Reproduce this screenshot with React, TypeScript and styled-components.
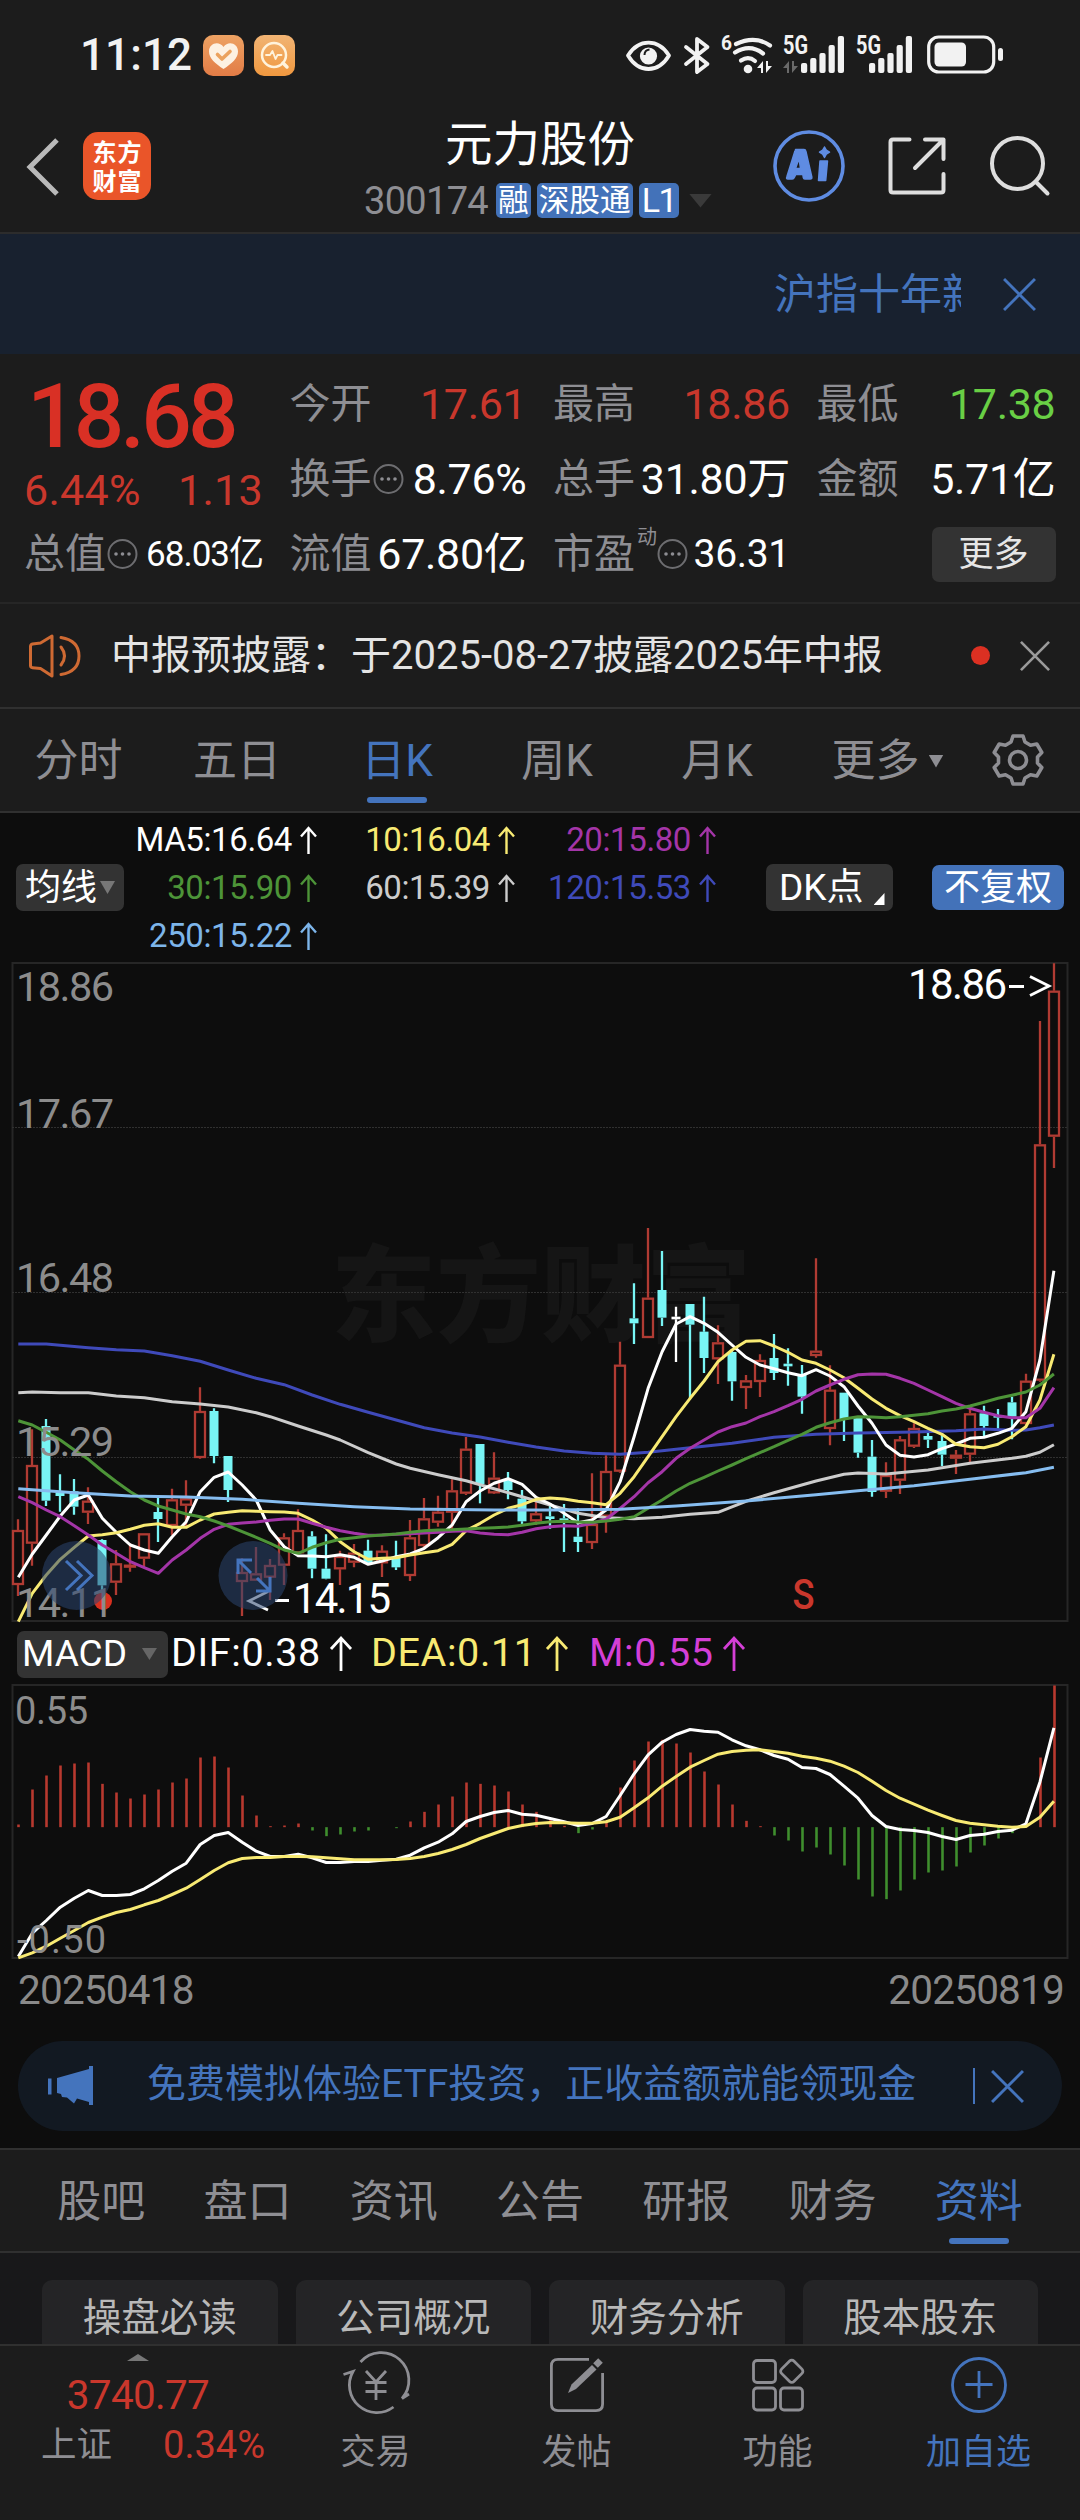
import React from "react";
import styled, { createGlobalStyle, css } from "styled-components";

const blue = "#4474bd";
const red = "#c9372c";
const grey = "#8e8e93";
const sans = `Roboto, "Noto Sans CJK SC", sans-serif`;

const Global = createGlobalStyle`
  body { margin: 0; background: #1c1c1c; }
  * { box-sizing: border-box; }
  svg { display: block; flex: none; overflow: visible; }
`;

const Page = styled.div`
  width: 1080px;
  height: 2520px;
  overflow: hidden;
  display: flex;
  flex-direction: column;
  background: #1c1c1c;
  color: #fff;
  font-family: ${sans};
  white-space: nowrap;
`;

/* ---------- status bar ---------- */
const StatusBar = styled.div`
  height: 110px;
  flex: none;
  padding: 0 76px 0 80px;
  display: flex;
  align-items: center;
  justify-content: space-between;
`;
const StatusLeft = styled.div`
  display: flex;
  align-items: center;
  gap: 10px;
`;
const Clock = styled.span`
  width: 113px;
  font-size: 44px;
  line-height: 50px;
  font-weight: 500;
  letter-spacing: 0.1px;
  color: #f2f2f2;
`;

/* ---------- header ---------- */
const Header = styled.header`
  height: 124px;
  flex: none;
  display: grid;
  grid-template-columns: 320px 440px 320px;
  align-items: start;
  border-bottom: 2px solid #2c2c2c;
`;
const HeaderLeft = styled.div`
  display: flex;
  align-items: center;
  gap: 23px;
  padding: 22px 0 0 26px;
`;
const AppLogo = styled.div`
  width: 68px;
  height: 68px;
  border-radius: 15px;
  background: #ea5529;
  display: grid;
  grid-template-columns: 25px 25px;
  grid-auto-rows: 29px;
  place-content: center;
  justify-items: center;
  font: 700 24px/27px "Noto Sans CJK SC", sans-serif;
`;
const HeaderMid = styled.div`
  display: flex;
  flex-direction: column;
  align-items: center;
`;
const StockName = styled.div`
  margin-top: 7px;
  font-size: 47.5px;
  line-height: 56px;
`;
const CodeRow = styled.div`
  margin: 9px 0 0 -4px;
  display: flex;
  align-items: center;
  gap: 6px;
`;
const Code = styled.span`
  margin-right: 2px;
  font-size: 38px;
  line-height: 36px;
  letter-spacing: -0.7px;
  color: ${grey};
  padding-top: 1px;
`;
const Tag = styled.span`
  height: 35px;
  padding: 0 2px;
  border-radius: 5px;
  background: #4372b9;
  font-size: 30.7px;
  line-height: 36px;
`;
const LevelTag = styled(Tag)`
  padding: 0 3px;
  font-size: 34px;
  letter-spacing: -1.6px;
  line-height: 35px;
`;
const Caret = styled.i<{ w: number; h: number; c: string; ml?: number; up?: boolean }>`
  flex: none;
  width: ${(p) => p.w}px;
  height: ${(p) => p.h}px;
  margin-left: ${(p) => p.ml ?? 0}px;
  background: ${(p) => p.c};
  clip-path: ${(p) => (p.up ? "polygon(0 100%, 100% 100%, 50% 0)" : "polygon(0 0, 100% 0, 50% 100%)")};
`;
const HeaderRight = styled.div`
  display: flex;
  align-items: center;
  padding: 19px 0 0 12px;
  gap: 41px;
`;

/* ---------- ticker banner ---------- */
const Banner = styled.div`
  height: 120px;
  flex: none;
  display: flex;
  align-items: center;
  justify-content: flex-end;
  padding-right: 44px;
  background: #18212f;
  color: ${blue};
`;
const Marquee = styled.div`
  width: 187px;
  margin: 2px 42px 0 0;
  overflow: hidden;
  font-size: 42px;
  line-height: 60px;
`;

/* ---------- quote ---------- */
const Quote = styled.section`
  height: 250px;
  flex: none;
  display: grid;
  grid-template-columns: 239px 237px 237px 239px;
  column-gap: 26.5px;
  padding: 13px 24px 0 24px;
  border-bottom: 2px solid #262626;
`;
const QuoteCol = styled.div`
  display: flex;
  flex-direction: column;
`;
const Price = styled.div`
  height: 96px;
  padding-left: 3px;
  font-size: 89px;
  line-height: 100px;
  font-weight: 500;
  letter-spacing: -3.9px;
  color: #d93025;
`;
const Change = styled.div`
  height: 54px;
  display: flex;
  justify-content: space-between;
  font-size: 43px;
  line-height: 55px;
  letter-spacing: 0.3px;
  color: ${red};
`;
const Cell = styled.div`
  height: 75px;
  display: flex;
  align-items: center;
  color: ${grey};
  font-size: 41px;
  line-height: 75px;
`;
const Val = styled.span<{ c?: string; size?: number; ls?: number }>`
  margin-left: auto;
  color: ${(p) => p.c ?? "#fff"};
  font-size: ${(p) => p.size ?? 43}px;
  letter-spacing: ${(p) => p.ls ?? -0.3}px;
`;
const Sup = styled.span`
  align-self: flex-start;
  margin: 8px -1px 0 2px;
  font-size: 20px;
  line-height: 24px;
`;
const MoreButton = styled.button`
  width: 124px;
  height: 55px;
  margin-left: auto;
  padding: 0;
  border: 0;
  border-radius: 7px;
  background: #333;
  color: #e6e6e6;
  font: 35px/52px ${sans};
`;

/* ---------- notice ---------- */
const Notice = styled.div`
  height: 105px;
  flex: none;
  display: flex;
  align-items: center;
  padding: 0 30px 0 28px;
  border-bottom: 2px solid #303030;
`;
const NoticeText = styled.span`
  margin-left: 29px;
  flex: 1;
  font-size: 40px;
  line-height: 60px;
  color: #e4e4e4;
`;
const RedDot = styled.i`
  width: 19px;
  height: 19px;
  margin-right: 30px;
  border-radius: 50%;
  background: #dc3022;
`;

/* ---------- tab bars ---------- */
const tabText = css<{ on?: boolean }>`
  position: relative;
  display: flex;
  align-items: center;
  justify-content: center;
  height: 100%;
  padding-top: 2px;
  font-size: 44px;
  line-height: 60px;
  color: ${(p) => (p.on ? blue : grey)};
  &::after {
    content: "";
    display: ${(p) => (p.on ? "block" : "none")};
    position: absolute;
    bottom: 8px;
    width: 60px;
    height: 6px;
    border-radius: 3px;
    background: ${blue};
  }
`;
const PeriodTabs = styled.nav`
  height: 104px;
  flex: none;
  display: grid;
  grid-template-columns: 157px repeat(4, 160px) 181px 1fr;
  align-items: center;
  border-bottom: 2px solid #303030;
  & > svg { margin-left: 13px; }
`;
const PeriodTab = styled.div<{ on?: boolean }>`
  ${tabText}
`;
const InfoTabs = styled.nav`
  height: 105px;
  flex: none;
  display: grid;
  grid-template-columns: repeat(7, 1fr);
  padding: 0 28px;
  border-top: 2px solid #303030;
  border-bottom: 2px solid #303030;
`;
const InfoTab = styled(PeriodTab)`
  &::after { bottom: 7px; }
`;

/* ---------- chart area ---------- */
const ChartArea = styled.section`
  height: 1335px;
  flex: none;
  background: #0d0d0d;
  display: flex;
  flex-direction: column;
`;
const Legend = styled.div`
  height: 149px;
  flex: none;
  display: flex;
  align-items: center;
  padding-left: 16px;
`;
const Chip = styled.button<{ w: number; primary?: boolean; ml?: number }>`
  width: ${(p) => p.w}px;
  height: ${(p) => (p.primary ? 45 : 47)}px;
  margin: 0 0 0 ${(p) => p.ml ?? 0}px;
  padding: 0 0 0 ${(p) => (p.primary ? 0 : 9)}px;
  display: flex;
  align-items: center;
  justify-content: ${(p) => (p.primary ? "center" : "flex-start")};
  border: 0;
  border-radius: 7px;
  background: ${(p) => (p.primary ? "#4372b9" : "#333")};
  color: #fff;
  font: 36px/46px ${sans};
`;
const DkChip = styled(Chip)`
  padding-left: 13px;
  font-size: 37px;
`;
const Corner = styled.i`
  align-self: flex-end;
  width: 11px;
  height: 12px;
  margin: 0 0 6px 10px;
  background: #fff;
  clip-path: polygon(100% 0, 100% 100%, 0 100%);
`;
const MaGrid = styled.div`
  display: grid;
  grid-template-columns: 193px 198px 201px;
  grid-auto-rows: 48px;
`;
const MaItem = styled.span<{ c: string }>`
  display: flex;
  align-items: center;
  justify-content: flex-end;
  gap: 8px;
  color: ${(p) => p.c};
  font-size: 33px;
  line-height: 48px;
  letter-spacing: -0.4px;
`;
const MacdHead = styled.div`
  height: 62px;
  flex: none;
  display: flex;
  align-items: center;
  padding-left: 17px;
`;
const MacdChip = styled(Chip)`
  padding-left: 5px;
  margin-top: 2px;
  margin-right: 3px;
  font-size: 37px;
`;
const MacdItem = styled.span<{ c: string; w: number }>`
  width: ${(p) => p.w}px;
  display: flex;
  align-items: center;
  gap: 9px;
  color: ${(p) => p.c};
  font-size: 39.5px;
  line-height: 60px;
  letter-spacing: 0.6px;
`;
const Dates = styled.div`
  height: 82px;
  flex: none;
  display: flex;
  justify-content: space-between;
  padding: 0 16px 0 18px;
  font-size: 40.5px;
  line-height: 63px;
  letter-spacing: -0.8px;
  color: #8a8a8a;
`;
const Promo = styled.div`
  height: 90px;
  flex: none;
  margin: 0 18px;
  padding: 0 38px 0 30px;
  display: flex;
  align-items: center;
  border-radius: 45px;
  background: #121922;
  color: ${blue};
`;
const PromoText = styled.span`
  flex: 1;
  margin-left: 53px;
  font-size: 39px;
  line-height: 60px;
  padding-bottom: 4px;
`;
const Divider = styled.i`
  width: 2px;
  height: 36px;
  margin-right: 16px;
  background: ${blue};
`;

/* ---------- info cards ---------- */
const Cards = styled.div`
  height: 91px;
  flex: none;
  overflow: hidden;
  display: grid;
  grid-template-columns: repeat(4, 1fr);
  gap: 18px;
  padding: 27px 42px 0;
  background: #18181a;
`;
const Card = styled.div`
  height: 80px;
  border-radius: 10px;
  background: #242426;
  text-align: center;
  font-size: 38.5px;
  line-height: 76px;
  color: #b9b9b9;
`;

/* ---------- bottom bar ---------- */
const BottomBar = styled.footer`
  flex: 1;
  display: grid;
  grid-template-columns: 275px repeat(4, 201px);
  border-top: 2px solid #303030;
`;
const IndexBox = styled.div`
  display: flex;
  flex-direction: column;
  align-items: center;
  padding: 8px 0 0 1px;
`;
const IndexValue = styled.div`
  margin-top: 6px;
  font-size: 40.5px;
  line-height: 56px;
  letter-spacing: -0.7px;
  color: ${red};
`;
const IndexRow = styled.div`
  align-self: stretch;
  display: flex;
  justify-content: space-between;
  padding: 0 10px 0 40px;
  font-size: 38px;
  line-height: 44px;
  letter-spacing: 0;
  color: ${red};
`;
const IndexName = styled.span`
  font-size: 35.5px;
  color: ${grey};
`;
const Action = styled.div<{ on?: boolean }>`
  display: flex;
  flex-direction: column;
  align-items: center;
  padding-top: 8px;
  font-size: 35px;
  line-height: 50px;
  color: ${(p) => (p.on ? blue : grey)};
  svg { margin-bottom: 12px; }
`;

/* ---------- small drawings ---------- */
const Cross = ({ s = 32, c }: { s?: number; c: string }) => (
  <svg width={s} height={s} viewBox="0 0 32 32" stroke={c} strokeWidth="2.8" fill="none">
    <path d="M1 1 31 31M31 1 1 31" />
  </svg>
);
const UpArrow = ({ s = 17, h = 28, w = 2.4 }: { s?: number; h?: number; w?: number }) => (
  <svg width={s} height={h} viewBox={`0 0 ${s} ${h}`} fill="none" stroke="currentColor" strokeWidth={w}>
    <path d={`M${s / 2} ${h}V2M1 ${s / 2 + 2} ${s / 2} 2 ${s - 1} ${s / 2 + 2}`} />
  </svg>
);
const Dots = () => (
  <svg width="32" height="32" viewBox="0 0 32 32">
    <circle cx="16.5" cy="15" r="14" fill="none" stroke="#6d6d70" strokeWidth="2" />
    <g fill={grey}>
      <circle cx="10" cy="15" r="1.8" />
      <circle cx="16.5" cy="15" r="1.8" />
      <circle cx="23" cy="15" r="1.8" />
    </g>
  </svg>
);
const HeartApp = () => (
  <svg width="41" height="41" viewBox="0 0 41 41">
    <defs>
      <linearGradient id="ha" x1="0" y1="0" x2="0" y2="1">
        <stop offset="0" stopColor="#eda263" />
        <stop offset="1" stopColor="#e27c46" />
      </linearGradient>
    </defs>
    <rect width="41" height="41" rx="10" fill="url(#ha)" />
    <path d="M20.5 34C12 28.500 6 23 6 16.500 6 8 16 5.500 20.500 12 25 5.500 35 8 35 16.500 35 23 29 28.500 20.500 34Z" fill="#fdf1e2" />
    <path d="m14.500 19.500 4.500 4.500 8-7.500" fill="none" stroke="#eba25e" strokeWidth="3.600" strokeLinecap="round" strokeLinejoin="round" />
  </svg>
);
const PulseApp = () => (
  <svg width="41" height="41" viewBox="0 0 41 41">
    <defs>
      <linearGradient id="pa" x1="0" y1="0" x2="0" y2="1">
        <stop offset="0" stopColor="#f1b474" />
        <stop offset="1" stopColor="#f0983f" />
      </linearGradient>
    </defs>
    <rect width="41" height="41" rx="10" fill="url(#pa)" />
    <g fill="none" stroke="#fff3dc" strokeLinecap="round" strokeLinejoin="round">
      <circle cx="20" cy="20" r="12" strokeWidth="2.500" />
      <path d="m29 28 4 4" strokeWidth="3.500" />
      <path d="M12 20h4l2.500-4 3 8 2-4h4" strokeWidth="1.800" />
    </g>
  </svg>
);
const bars = [10, 15, 20, 28, 37];
const StatusIcons = () => (
  <svg width="380" height="44" viewBox="624 32 380 44">
    <g fill="none" stroke="#f2f2f2" strokeWidth="3.800" strokeLinejoin="round" strokeLinecap="round">
      <path d="M628 54.500C634 45 641 41.700 648.500 41.700S663 45 669 54.500C663 64.500 656 68 648.500 68S634 64.500 628 54.500Z" />
      <path d="m686 46 21.500 17-10.500 8V38l10.500 8L686 63" />
      <path d="M736 43q19-9 34 1.500" strokeWidth="4.200" />
      <path d="M735 51.500q15-9 28 1" strokeWidth="4.200" />
      <path d="M741 59.500q7.500-5 14 .5" strokeWidth="4.200" />
    </g>
    <circle cx="648.500" cy="55" r="8.600" fill="#f2f2f2" />
    <path d="M644.500 54q0-5 5-5.500" fill="none" stroke="#1c1c1c" strokeWidth="2" />
    <circle cx="748" cy="68" r="4.300" fill="#f2f2f2" />
    <path d="m763 60-6 7h4v5h2zM766 72l6-7h-4v-5h-2z" fill="#f2f2f2" />
    <path d="m789 60-6 7h4v5h2zM792 72l6-7h-4v-5h-2z" fill="#6a6a6a" />
    <g fill="#f2f2f2" fontFamily="Roboto, sans-serif" fontWeight="700">
      <text x="721" y="49" fontSize="21" textLength="11" lengthAdjust="spacingAndGlyphs">6</text>
      <text x="783" y="53" fontSize="26" textLength="25" lengthAdjust="spacingAndGlyphs">5G</text>
      <text x="856" y="53" fontSize="26" textLength="25" lengthAdjust="spacingAndGlyphs">5G</text>
      {[801, 869].map((x) => bars.map((h, i) => <rect key={x + i} x={x + i * 9.200} y={72 - h} width="6.200" height={h} rx="2" />))}
    </g>
    <rect x="928.700" y="36" width="65" height="35" rx="10" fill="none" stroke="#f2f2f2" strokeWidth="3.200" />
    <rect x="934.500" y="41.500" width="31.500" height="24" rx="4.500" fill="#f2f2f2" />
    <rect x="998" y="47" width="5" height="13" rx="2.500" fill="#f2f2f2" />
  </svg>
);
const Back = () => (
  <svg width="34" height="56" viewBox="0 0 34 56" fill="none" stroke="#b9b9b9" strokeWidth="5">
    <path d="M31 2 4 29 31 56" />
  </svg>
);
const AiIcon = () => (
  <svg width="74" height="74" viewBox="0 0 74 74">
    <circle cx="37" cy="37" r="34" fill="none" stroke="#5f8ce2" strokeWidth="3.600" />
    <g fill="#5f8ce2" stroke="#5f8ce2" strokeWidth="1.500" strokeLinejoin="round">
      <path fillRule="evenodd" d="M23.500 20.500h8.500q1.500 0 1.800 1.500l6 26q.3 2-1.500 2h-5.500q-1.200 0-1.500-1.500l-.5-3h-7l-1.500 3q-.7 1.500-2 1.500h-4.500q-1.800 0-1-2l8-25.500q.3-2 2.200-2zm3.500 9-3.500 10h5z" />
      <path d="M48 32h7.500l-1.800 19.500h-7.200z" />
      <path d="m52.500 18 1.800 3.200 3.200 2-3.200 2-1.800 3.300-1.800-3.300-3.200-2 3.200-2z" />
    </g>
  </svg>
);
const ShareIcon = () => (
  <svg width="60" height="60" viewBox="0 0 60 60" fill="none" stroke="#dedede" strokeWidth="4" strokeLinecap="round" strokeLinejoin="round">
    <path d="M22.500 3.500H6q-2.500 0-2.500 2.500v48q0 2.500 2.500 2.500h48q2.500 0 2.500-2.500V38" />
    <path d="M38 3.500h18.500V23M56.500 3.500 28 32" />
  </svg>
);
const SearchIcon = () => (
  <svg width="62" height="62" viewBox="0 0 62 62" fill="none" stroke="#dedede" strokeWidth="4" strokeLinecap="round">
    <circle cx="29.5" cy="28.500" r="25.500" />
    <path d="m47.500 46.500 12 12" />
  </svg>
);
const Speaker = () => (
  <svg width="54" height="46" viewBox="0 0 54 46" fill="none" stroke="#cf6a33" strokeWidth="3" strokeLinejoin="round" strokeLinecap="round">
    <path d="M2.500 13.500q0-2 2-2.500l8-1L24 3v40l-11.500-7.500-8-.8q-2-.2-2-2.200z" />
    <path d="M33 14q7 9 0 18M33 4.500q18 3 18 18.500T33 41.500" />
  </svg>
);
const Gear = () => (
  <svg width="54" height="54" viewBox="0 0 54 54" fill="none" stroke={grey} strokeWidth="3.600" strokeLinejoin="round">
    <path d="M22 3h10l2 6 5.500 3.200 6.300-1.200 5 8.500-4.300 4.500v6l4.300 4.500-5 8.500-6.300-1.200L34 45l-2 6H22l-2-6-5.500-3.200L8.200 43l-5-8.500L7.500 30v-6l-4.300-4.500 5-8.500 6.300 1.200L20 9z" />
    <circle cx="27" cy="27" r="8.500" />
  </svg>
);
const Horn = () => (
  <svg width="46" height="40" viewBox="0 0 46 40" fill={blue}>
    <path d="M0 12.500h3.500v16H0zM9 12 41 3V0h4v39h-4v-3l-12-3.500-3 5-7-6-5-.5-1-3-4-1z" />
  </svg>
);
const YenIcon = () => (
  <svg width="68" height="62" viewBox="0 0 68 62" fill="none" stroke="currentColor" strokeWidth="2.800">
    <path d="M18.500 8A27.500 27.500 0 0 1 60 44.500l7-4.500M51.500 53A27.500 27.500 0 0 1 11 17.500L1.500 20.500" />
    <path d="m24 17 10 11 10-11M34 28v18M23.500 28.500h21M23.500 37.500h21" />
  </svg>
);
const PostIcon = () => (
  <svg width="62" height="62" viewBox="0 0 62 62" fill="none" stroke="currentColor" strokeWidth="2.800">
    <path d="M43 5.400H12q-6.600 0-6.600 6.600v38q0 6.600 6.600 6.600h38q6.600 0 6.600-6.600V19" />
    <path d="m22 39 3.500-8.500L46 11l4.500 4.500L30 35z" fill="currentColor" stroke="none" />
    <path d="m49.500 11.500 5-5" strokeWidth="6.500" />
  </svg>
);
const GridIcon = () => (
  <svg width="62" height="62" viewBox="0 0 62 62" fill="none" stroke="currentColor" strokeWidth="2.800">
    <rect x="6.500" y="6.500" width="22" height="22" rx="3.500" />
    <rect x="6.500" y="34" width="22" height="22" rx="3.500" />
    <rect x="33.500" y="34" width="22" height="22" rx="3.500" />
    <rect x="36" y="8.500" width="17.500" height="17.500" rx="3" transform="rotate(45 44.750 17.250)" />
  </svg>
);
const PlusIcon = () => (
  <svg width="62" height="62" viewBox="0 0 62 62" fill="none" stroke="currentColor" strokeWidth="2.800">
    <circle cx="31" cy="31" r="26.500" />
    <path d="M31 17v27M17.500 30.500h27" />
  </svg>
);

/* ---------- chart data ---------- */
type Candle = [number, number, number, number, "R" | "G" | "W"];
/* high, body top, body bottom, low on the chart's 1/3 px scale */
const candles: Candle[] = [
  [658, 690, 855, 888, "R"], [388, 495, 731, 797, "R"], [357, 378, 602, 618, "G"], [523, 579, 588, 635, "G"],
  [537, 574, 620, 644, "G"], [562, 602, 638, 672, "R"], [718, 720, 856, 880, "G"], [750, 790, 848, 885, "R"],
  [730, 794, 802, 815, "R"], [700, 700, 776, 803, "R"], [592, 636, 657, 726, "G"], [566, 598, 678, 705, "R"],
  [541, 595, 617, 680, "R"], [262, 333, 474, 476, "R"], [325, 333, 468, 490, "G"], [468, 468, 570, 606, "G"],
  [775, 816, 846, 948, "R"], [741, 820, 842, 842, "R"], [777, 795, 833, 900, "R"], [700, 712, 797, 855, "R"],
  [628, 690, 760, 765, "R"], [694, 709, 806, 835, "G"], [703, 806, 836, 838, "G"], [752, 768, 808, 855, "R"],
  [732, 758, 788, 802, "R"], [719, 752, 790, 795, "G"], [736, 752, 790, 831, "R"], [722, 772, 802, 810, "G"],
  [660, 712, 828, 843, "R"], [594, 655, 738, 745, "R"], [587, 635, 668, 680, "R"], [538, 571, 638, 690, "R"],
  [411, 446, 581, 585, "R"], [432, 432, 552, 610, "G"], [457, 533, 580, 582, "R"], [516, 540, 570, 598, "G"],
  [570, 596, 664, 672, "G"], [600, 640, 664, 675, "R"], [618, 649, 657, 686, "G"], [612, 655, 668, 756, "G"],
  [625, 710, 726, 756, "G"], [520, 672, 729, 747, "R"], [466, 513, 650, 698, "R"], [125, 194, 515, 518, "R"],
  [-50, 55, 70, 132, "G"], [-216, -7, 114, 114, "R"], [-147, -30, 53, 78, "G"], [20, 50, 58, 186, "W"],
  [12, 12, 74, 298, "G"], [-10, 95, 174, 219, "G"], [76, 127, 178, 252, "R"], [150, 156, 244, 302, "G"],
  [225, 241, 264, 327, "R"], [163, 180, 246, 291, "R"], [102, 174, 219, 240, "G"], [145, 191, 199, 257, "G"],
  [195, 222, 290, 341, "G"], [-125, 152, 168, 173, "R"], [196, 269, 387, 436, "R"], [278, 278, 358, 423, "G"],
  [350, 352, 458, 473, "G"], [420, 470, 576, 590, "G"], [487, 525, 575, 594, "R"], [408, 418, 542, 582, "R"],
  [370, 384, 440, 444, "R"], [393, 408, 419, 444, "G"], [400, 423, 464, 498, "G"], [450, 464, 476, 522, "R"],
  [325, 340, 464, 487, "R"], [317, 340, 378, 412, "G"], [327, 345, 353, 390, "G"], [290, 307, 350, 418, "G"],
  [221, 242, 372, 378, "R"], [-837, -467, 242, 245, "R"], [-1010, -928, -490, -396, "R"],
];
const seq = (...v: number[]): [number, number][] => v.map((y, i) => [i, y]);
const pairs = (...v: number[]): [number, number][] =>
  v.reduce<[number, number][]>((a, n, i) => (i % 2 ? (a[a.length - 1][1] = n, a) : [...a, [n, 0]]), []);

const ma5 = seq(832, 762, 705, 648, 600, 585, 655, 697, 735, 750, 760, 710, 665, 575, 532, 516, 555, 600, 690, 740, 767, 768, 770, 764, 772, 793, 783, 770, 762, 745, 713, 675, 605, 573, 550, 536, 553, 592, 612, 640, 668, 660, 630, 545, 410, 265, 155, 72, 50, 70, 97, 135, 172, 195, 206, 218, 227, 209, 228, 260, 318, 370, 435, 466, 471, 464, 446, 432, 415, 412, 400, 385, 335, 180, -88);
const ma10 = seq(965, 880, 825, 778, 742, 708, 704, 698, 688, 676, 671, 682, 682, 660, 642, 637, 632, 634, 635, 636, 640, 660, 685, 725, 755, 778, 775, 773, 765, 758, 752, 733, 692, 670, 645, 625, 614, 598, 594, 597, 604, 608, 614, 580, 530, 470, 410, 350, 295, 243, 185, 150, 124, 122, 138, 157, 180, 190, 210, 233, 265, 297, 325, 347, 365, 385, 403, 433, 440, 443, 433, 410, 380, 300, 163);
const ma20 = seq(590, 608, 630, 650, 677, 705, 735, 760, 785, 803, 820, 780, 750, 715, 688, 673, 669, 666, 661, 657, 657, 670, 682, 692, 700, 706, 705, 703, 701, 699, 697, 694, 692, 699, 703, 704, 697, 686, 680, 677, 679, 670, 658, 625, 590, 548, 515, 475, 445, 420, 396, 380, 369, 350, 335, 317, 298, 273, 255, 238, 224, 222, 223, 235, 250, 270, 290, 310, 325, 337, 347, 353, 353, 325, 263);
const ma30 = seq(362, 375, 397, 420, 450, 478, 513, 545, 575, 600, 618, 630, 642, 650, 663, 678, 695, 712, 730, 750, 760, 742, 728, 718, 713, 708, 705, 702, 697, 692, 690, 689, 687, 685, 683, 681, 676, 670, 665, 664, 666, 667, 663, 658, 650, 625, 600, 573, 550, 532, 513, 495, 476, 458, 440, 421, 403, 382, 368, 357, 350, 351, 353, 350, 346, 341, 333, 327, 318, 307, 295, 286, 276, 255, 222);
const ma60 = pairs(0, 278, 1, 276, 3, 278, 5, 278, 7, 288, 9, 293, 11, 305, 13, 312, 15, 321, 17, 338, 18, 350, 20, 378, 22, 405, 23, 420, 25, 458, 27, 492, 28, 505, 30, 524, 32, 542, 34, 566, 36, 590, 38, 615, 40, 640, 42, 653, 44, 656, 46, 652, 48, 643, 50, 637, 52, 604, 54, 578, 57, 543, 59, 523, 60, 519, 62, 522, 65, 510, 68, 490, 71, 475, 72, 469, 73, 457, 74, 434);
const ma120 = pairs(0, 132, 2, 132, 5, 143, 7, 149, 9, 153, 11, 167, 13, 184, 15, 210, 17, 235, 19, 254, 21, 285, 23, 313, 25, 337, 27, 360, 29, 383, 31, 399, 33, 411, 35, 427, 37, 441, 39, 453, 41, 460, 43, 463, 45, 457, 48, 443, 51, 430, 54, 412, 57, 403, 60, 399, 64, 396, 67, 392, 69, 387, 71, 391, 72, 390, 73, 383, 74, 375);
const ma250 = pairs(0, 566, 4, 578, 8, 588, 12, 591, 16, 598, 20, 610, 24, 620, 28, 627, 34, 630, 38, 630, 43, 628, 47, 618, 52, 603, 57, 584, 60, 572, 64, 557, 68, 538, 72, 518, 73, 510, 74, 502);

const hist = [552, 447, 405, 375, 369, 366, 430, 456, 474, 462, 447, 426, 414, 351, 348, 381, 465, 525, 557, 555, 549, 570, 587, 582, 573, 570, 560, 563, 543, 514, 492, 468, 426, 430, 435, 453, 492, 514, 535, 556, 578, 567, 540, 441, 360, 303, 298, 309, 336, 393, 432, 492, 541, 557, 585, 600, 633, 621, 642, 675, 717, 768, 776, 750, 717, 696, 690, 678, 636, 615, 594, 578, 548, 351, 135];
const dif = seq(948, 878, 840, 800, 773, 750, 765, 765, 762, 745, 720, 692, 668, 612, 585, 576, 605, 632, 648, 648, 641, 652, 666, 666, 663, 663, 659, 656, 644, 622, 605, 580, 543, 528, 516, 510, 521, 524, 534, 544, 555, 549, 528, 465, 400, 343, 305, 282, 267, 272, 275, 298, 316, 328, 345, 356, 381, 384, 402, 437, 473, 525, 558, 567, 570, 576, 588, 597, 585, 581, 573, 569, 550, 425, 262);
const dea = seq(952, 937, 917, 893, 870, 846, 830, 816, 807, 793, 780, 762, 743, 717, 690, 667, 654, 651, 651, 648, 648, 649, 652, 655, 658, 658, 658, 657, 654, 648, 639, 627, 612, 594, 579, 564, 555, 549, 546, 547, 548, 548, 544, 530, 502, 472, 437, 408, 380, 360, 341, 333, 329, 328, 333, 338, 347, 353, 362, 377, 396, 422, 450, 473, 491, 509, 525, 540, 548, 553, 557, 560, 558, 530, 482);

const px = (i: number) => 18.3 + i * 13.995;
const path = (pts: [number, number][], base: number) =>
  pts.map(([i, y]) => `${px(i).toFixed(1)},${(base + y / 3).toFixed(1)}`).join(" ");

const K0 = 338;
const candleColor = { R: "#b03b33", G: "#78f5f5", W: "#fff" };
const lines: [[number, number][], string][] = [
  [ma120, "#3f4aba"], [ma60, "#cccccc"], [ma5, "#ffffff"], [ma10, "#f8ea73"],
  [ma20, "#a435a8"], [ma30, "#4d9438"], [ma250, "#86bdf0"],
];
const priceLabels: [string, number][] = [["18.86", 39], ["17.67", 166], ["16.48", 330], ["15.29", 494], ["14.11", 655]];

const KChart = () => (
  <svg width="1080" height="660" viewBox="0 0 1080 660" fontFamily={`Roboto, "Noto Sans CJK SC", sans-serif`}>
    <text x="331" y="371" fontSize="105" fontWeight="900" fill="#151515" textLength="420">东方财富</text>
    <rect x="12.500" y="1" width="1055" height="658" fill="none" stroke="#262626" strokeWidth="2" />
    {[165.500, 330.500, 495.500].map((y) => (
      <line key={y} x1="12" x2="1068" y1={y} y2={y} stroke="#303030" strokeDasharray="2 1" />
    ))}
    {candles.map(([h, t, b, l, k], i) => {
      const x = Math.round(px(i)), c = candleColor[k];
      const [yh, yt, yb, yl] = [h, t, b, l].map((v) => K0 + v / 3);
      return (
        <g key={i} stroke={c} strokeWidth="2.300">
          <path d={`M${x} ${yh}V${yt}M${x} ${yb}V${yl}`} />
          {k === "R" ? (
            <rect x={x - 5} y={yt + 1} width="10" height={Math.max(yb - yt - 2, 1)} fill="none" />
          ) : (
            <rect x={x - 4.500} y={yt} width="9" height={yb - yt} fill={c} stroke="none" />
          )}
        </g>
      );
    })}
    {lines.map(([pts, c]) => (
      <polyline key={c} points={path(pts, K0)} fill="none" stroke={c} strokeWidth="3" strokeLinejoin="round" />
    ))}
    <circle cx="103" cy="639" r="9" fill="#d9301f" />
    <g fontSize="41.500" fill="#8c8c8c">
      {priceLabels.map(([s, y]) => (
        <text key={s} x="16" y={y} textLength="98">{s}</text>
      ))}
    </g>
    <g fontSize="42" fill="#fff">
      <text x="908" y="37" textLength="99">18.86</text>
      <path d="M1009 24.500H1024M1030 14.500 1049 24 1030 33.500" fill="none" stroke="#fff" strokeWidth="2.800" />
      <text x="293" y="651" textLength="98">14.15</text>
      <path d="M289 638.500H275M268 629.500 249 639 268 648" fill="none" stroke="#fff" strokeWidth="2.800" />
    </g>
    <text x="803.500" y="647" fontSize="42" fontWeight="500" fill={red} textAnchor="middle" textLength="22" lengthAdjust="spacingAndGlyphs">S</text>
    <g fill="#2b456f" fillOpacity="0.550">
      <circle cx="76.500" cy="613.500" r="34.500" />
      <circle cx="253" cy="613.500" r="34.500" />
    </g>
    <g fill="none" stroke="#4474bd" strokeWidth="3">
      <path d="m66 599 15 14.500L66 628M77 599l15 14.500L77 628" />
      <path d="M252 598h-14v14M239 599l12 12M256 629h14v-14M269 628l-12-12" />
    </g>
  </svg>
);

const M0 = -43.5;
const MacdChart = () => (
  <svg width="1080" height="275" viewBox="0 0 1080 275" fontFamily="Roboto, sans-serif">
    <rect x="12.500" y="1" width="1055" height="273" fill="none" stroke="#262626" strokeWidth="2" />
    {hist.map((v, i) => (
      <line key={i} x1={Math.round(px(i)) + 0.5} x2={Math.round(px(i)) + 0.5} y1={M0 + 560 / 3} y2={M0 + v / 3} stroke={v < 560 ? "#b8392f" : "#3f8f2e"} strokeWidth="2.600" />
    ))}
    <g fill="none" strokeWidth="3" strokeLinejoin="round">
      <polyline points={path(dif, M0)} stroke="#fff" />
      <polyline points={path(dea, M0)} stroke="#f8ea73" />
    </g>
    <g fontSize="38" fill="#8c8c8c">
      <text x="15" y="40" textLength="73">0.55</text>
      <text x="17" y="269" textLength="89">-0.50</text>
    </g>
  </svg>
);

export default function App() {
  return (
    <Page>
      <Global />
      <StatusBar>
        <StatusLeft>
          <Clock>11:12</Clock>
          <HeartApp />
          <PulseApp />
        </StatusLeft>
        <StatusIcons />
      </StatusBar>
      <Header>
        <HeaderLeft>
          <Back />
          <AppLogo>
            <span>东</span><span>方</span><span>财</span><span>富</span>
          </AppLogo>
        </HeaderLeft>
        <HeaderMid>
          <StockName>元力股份</StockName>
          <CodeRow>
            <Code>300174</Code>
            <Tag>融</Tag>
            <Tag>深股通</Tag>
            <LevelTag>L1</LevelTag>
            <Caret w={23} h={14} c="#3a3a3a" ml={4} />
          </CodeRow>
        </HeaderMid>
        <HeaderRight>
          <AiIcon />
          <ShareIcon />
          <SearchIcon />
        </HeaderRight>
      </Header>
      <Banner>
        <Marquee>沪指十年新高</Marquee>
        <Cross s={33} c={blue} />
      </Banner>
      <Quote>
        <QuoteCol>
          <Price>18.68</Price>
          <Change><span>6.44%</span><span>1.13</span></Change>
          <Cell>总值<Dots /><Val size={35} ls={-1}>68.03亿</Val></Cell>
        </QuoteCol>
        <QuoteCol>
          <Cell>今开<Val c={red}>17.61</Val></Cell>
          <Cell>换手<Dots /><Val>8.76%</Val></Cell>
          <Cell>流值<Val>67.80亿</Val></Cell>
        </QuoteCol>
        <QuoteCol>
          <Cell>最高<Val c={red}>18.86</Val></Cell>
          <Cell>总手<Val>31.80万</Val></Cell>
          <Cell>市盈<Sup>动</Sup><Dots /><Val size={39}>36.31</Val></Cell>
        </QuoteCol>
        <QuoteCol>
          <Cell>最低<Val c="#69cf45">17.38</Val></Cell>
          <Cell>金额<Val>5.71亿</Val></Cell>
          <Cell><MoreButton>更多</MoreButton></Cell>
        </QuoteCol>
      </Quote>
      <Notice>
        <Speaker />
        <NoticeText>中报预披露：于2025-08-27披露2025年中报</NoticeText>
        <RedDot />
        <Cross s={30} c="#9a9a9a" />
      </Notice>
      <PeriodTabs>
        <PeriodTab>分时</PeriodTab>
        <PeriodTab>五日</PeriodTab>
        <PeriodTab on>日K</PeriodTab>
        <PeriodTab>周K</PeriodTab>
        <PeriodTab>月K</PeriodTab>
        <PeriodTab>更多<Caret w={15} h={13} c={grey} ml={9} /></PeriodTab>
        <Gear />
      </PeriodTabs>
      <ChartArea>
        <Legend>
          <Chip w={108}>均线<Caret w={15} h={13} c="#777" ml={3} /></Chip>
          <MaGrid>
            <MaItem c="#fff">MA5:16.64<UpArrow /></MaItem>
            <MaItem c="#f8ea73">10:16.04<UpArrow /></MaItem>
            <MaItem c="#a435a8">20:15.80<UpArrow /></MaItem>
            <MaItem c="#4d9438">30:15.90<UpArrow /></MaItem>
            <MaItem c="#ccc">60:15.39<UpArrow /></MaItem>
            <MaItem c="#3f4aba">120:15.53<UpArrow /></MaItem>
            <MaItem c="#7db5ea">250:15.22<UpArrow /></MaItem>
          </MaGrid>
          <DkChip w={127} ml={50}>DK点<Corner /></DkChip>
          <Chip w={132} ml={39} primary>不复权</Chip>
        </Legend>
        <KChart />
        <MacdHead>
          <MacdChip w={151}>MACD<Caret w={15} h={12} c="#666" ml={15} /></MacdChip>
          <MacdItem c="#fff" w={200}>DIF:0.38<UpArrow s={22} h={35} w={2.8} /></MacdItem>
          <MacdItem c="#f8ea73" w={218}>DEA:0.11<UpArrow s={22} h={35} w={2.8} /></MacdItem>
          <MacdItem c="#d43fd6" w={160}>M:0.55<UpArrow s={22} h={35} w={2.8} /></MacdItem>
        </MacdHead>
        <MacdChart />
        <Dates><span>20250418</span><span>20250819</span></Dates>
        <Promo>
          <Horn />
          <PromoText>免费模拟体验ETF投资，正收益额就能领现金</PromoText>
          <Divider />
          <Cross s={33} c={blue} />
        </Promo>
      </ChartArea>
      <InfoTabs>
        {["股吧", "盘口", "资讯", "公告", "研报", "财务", "资料"].map((t) => (
          <InfoTab key={t} on={t === "资料"}>{t}</InfoTab>
        ))}
      </InfoTabs>
      <Cards>
        {["操盘必读", "公司概况", "财务分析", "股本股东"].map((t) => <Card key={t}>{t}</Card>)}
      </Cards>
      <BottomBar>
        <IndexBox>
          <Caret w={22} h={7} c="#777" up />
          <IndexValue>3740.77</IndexValue>
          <IndexRow><IndexName>上证</IndexName>0.34%</IndexRow>
        </IndexBox>
        <Action><YenIcon />交易</Action>
        <Action><PostIcon />发帖</Action>
        <Action><GridIcon />功能</Action>
        <Action on><PlusIcon />加自选</Action>
      </BottomBar>
    </Page>
  );
}
